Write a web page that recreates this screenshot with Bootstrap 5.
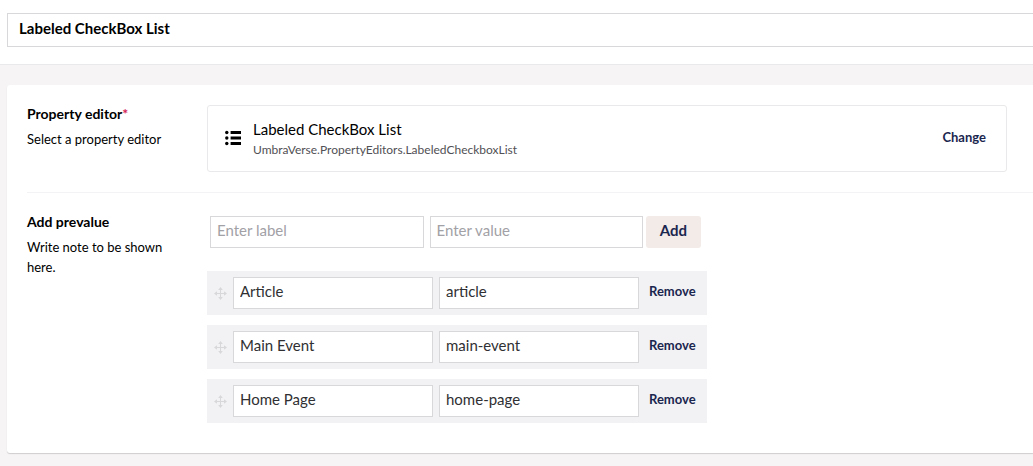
<!DOCTYPE html>
<html lang="en">
<head>
<meta charset="utf-8">
<meta name="viewport" content="width=device-width, initial-scale=1">
<title>Labeled CheckBox List</title>
<link href="https://cdn.jsdelivr.net/npm/bootstrap@5.3.0/dist/css/bootstrap.min.css" rel="stylesheet">
<style>
  body { font-family: Lato, "Liberation Sans", sans-serif; font-size: 15px; line-height: 20px; color: #000; background: #f6f4f4; overflow-x: hidden; }
  .editor-header { padding: 13px 0 17px 7px; border-bottom: 1px solid #e9e9eb; }
  .form-control { height: 32px; padding: 2px 6px 6px; font-size: 15px; line-height: 20px; color: #303033; border: 1px solid #d8d7d9; border-radius: 0; }
  .form-control::placeholder { color: #a2a1a6; }
  .editor-header .form-control { height: 34px; padding: 2px 11px 6px; color: #000; border-right: 0; }
  .panel { margin: 20px 0 12px 7px; padding: 20px 0 30px 20px; border-radius: 3px 0 0 3px; box-shadow: 0 1px 1px 0 rgba(0,0,0,.16); }
  .property { gap: 20px; }
  .property + .property { margin-top: 20px; padding-top: 20px; border-top: 1px solid #f3f3f5; }
  .property-info { width: 160px; }
  .property-body { margin-right: 26px; }
  .property-info .title, .property-info label { font-size: 14px; line-height: 18px; }
  .note { margin-top: 6px; font-size: 13px; }
  .required { color: #d42054; }
  .picker { max-width: 800px; height: 67px; padding: 0 20px 0 17px; border: 1px solid #e9e9eb; border-radius: 3px; }
  .picker-name { line-height: 22px; }
  .picker-alias { font-size: 12px; color: #515054; }
  .action { padding: 0 0 4px; border: 0; background: none; font-size: 13px; font-weight: 700; line-height: 20px; color: #1b264f; }
  .add-form { gap: 6px; max-width: 491px; margin: 3px 0 23px 3px; }
  .add-form .btn { width: 55px; height: 32px; margin-left: -3px; padding: 0 0 4px; border: 0; border-radius: 3px; background: #f3ebe8; color: #1b264f; font-size: 15px; font-weight: 700; }
  .prevalues { gap: 10px; max-width: 500px; }
  .prevalue { gap: 6px; padding: 6px 11px 6px 7px; background: #f2f2f4; }
  .prevalue .form-control { max-width: 200px; }
  .prevalue .action { margin-left: 4px; }
  .grip { cursor: move; }
</style>
</head>
<body>
<header class="editor-header bg-white">
  <input class="form-control fw-bold" type="text" aria-label="Name" value="Labeled CheckBox List">
</header>
<main class="panel bg-white">
  <section class="property d-flex">
    <div class="property-info flex-shrink-0">
      <div class="title fw-bold">Property editor<span class="required">*</span></div>
      <div class="note">Select a property editor</div>
    </div>
    <div class="property-body flex-grow-1">
      <div class="picker d-flex align-items-center">
        <svg class="flex-shrink-0 me-2" width="20" height="21" viewBox="0 0 20 21" aria-hidden="true">
          <path d="M5.600 3H16v3H5.600zM5.600 8.500H16v3H5.600zM5.600 14H16v3H5.600z"/>
          <circle cx="1.800" cy="4.500" r="1.700"/><circle cx="1.800" cy="10" r="1.700"/><circle cx="1.800" cy="15.500" r="1.700"/>
        </svg>
        <div class="flex-grow-1">
          <div class="picker-name">Labeled CheckBox List</div>
          <div class="picker-alias">UmbraVerse.PropertyEditors.LabeledCheckboxList</div>
        </div>
        <button class="action" type="button">Change</button>
      </div>
    </div>
  </section>
  <section class="property d-flex">
    <div class="property-info flex-shrink-0">
      <label class="d-block fw-bold" for="new-label">Add prevalue</label>
      <div class="note">Write note to be shown here.</div>
    </div>
    <div class="property-body flex-grow-1">
      <form class="add-form d-flex">
        <input class="form-control" id="new-label" type="text" placeholder="Enter label">
        <input class="form-control" type="text" placeholder="Enter value" aria-label="Value">
        <button class="btn flex-shrink-0" type="button">Add</button>
      </form>
      <div class="prevalues d-flex flex-column">
        <div class="prevalue d-flex align-items-center">
          <svg class="grip flex-shrink-0" width="13" height="13" viewBox="0 0 13 13" aria-hidden="true"><use href="#move"/></svg>
          <input class="form-control" type="text" aria-label="Label" value="Article">
          <input class="form-control" type="text" aria-label="Value" value="article">
          <button class="action" type="button">Remove</button>
        </div>
        <div class="prevalue d-flex align-items-center">
          <svg class="grip flex-shrink-0" width="13" height="13" viewBox="0 0 13 13" aria-hidden="true"><use href="#move"/></svg>
          <input class="form-control" type="text" aria-label="Label" value="Main Event">
          <input class="form-control" type="text" aria-label="Value" value="main-event">
          <button class="action" type="button">Remove</button>
        </div>
        <div class="prevalue d-flex align-items-center">
          <svg class="grip flex-shrink-0" width="13" height="13" viewBox="0 0 13 13" aria-hidden="true"><use href="#move"/></svg>
          <input class="form-control" type="text" aria-label="Label" value="Home Page">
          <input class="form-control" type="text" aria-label="Value" value="home-page">
          <button class="action" type="button">Remove</button>
        </div>
      </div>
    </div>
  </section>
</main>
<svg class="d-none" aria-hidden="true">
  <symbol id="move" viewBox="0 0 13 13">
    <path d="M6.500 1v11M1 6.500h11" stroke="#d8d7d9" fill="none"/>
    <path d="M6.500 0l2.300 3H4.200zM6.500 13l2.300-3H4.200zM0 6.500l3-2.300v4.600zM13 6.500l-3-2.300v4.600z" fill="#d8d7d9"/>
  </symbol>
</svg>
<script src="https://cdn.jsdelivr.net/npm/bootstrap@5.3.0/dist/js/bootstrap.bundle.min.js"></script>
</body>
</html>
